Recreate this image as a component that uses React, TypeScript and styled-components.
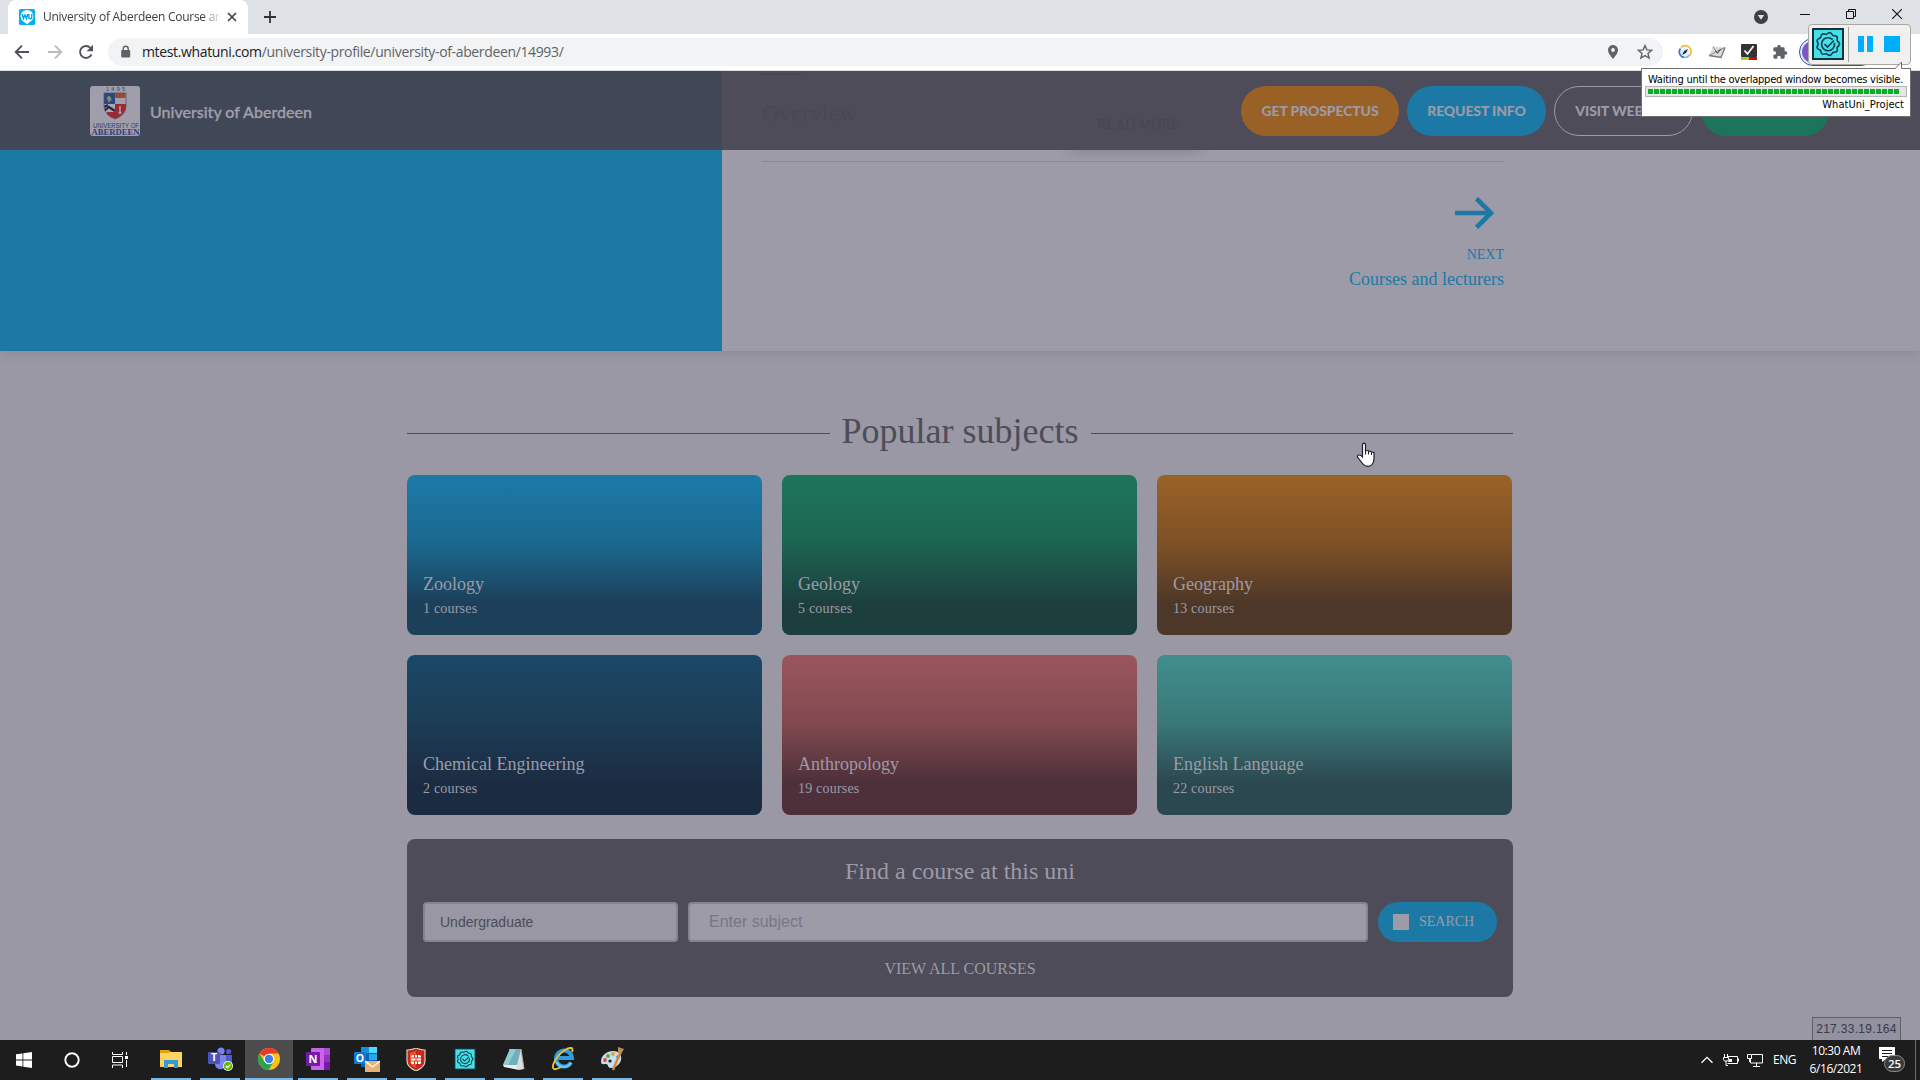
import React from 'react';
import styled, { createGlobalStyle } from 'styled-components';

const serif = '"Liberation Serif", "Times New Roman", serif';
const arial = '"Liberation Sans", Arial, sans-serif';
const ui = '"Open Sans", "Noto Sans", sans-serif';
const lato = 'Lato, sans-serif';
const pale = '#9c9ba7';
const slate = '#4d4c58';
const blue = '#1c79a6';

const Global = createGlobalStyle`
  * { box-sizing: border-box; }
  body { margin: 0; background: #9998a4; overflow: hidden; }
`;

const Screen = styled.div`
  position: relative;
  width: 1920px;
  height: 1080px;
  display: flex;
  flex-direction: column;
  overflow: hidden;
  background: #9998a4;
  font-family: ${serif};
  white-space: nowrap;
`;

/* ---------- browser chrome ---------- */
const TabStrip = styled.div`
  height: 34px;
  flex: none;
  display: flex;
  align-items: stretch;
  background: #dee1e6;
  padding-left: 8px;
`;
const Tab = styled.div`
  width: 240px;
  background: #fff;
  border-radius: 8px 8px 0 0;
  display: flex;
  align-items: center;
  padding: 0 10px 0 11px;
`;
const TabTitle = styled.div`
  width: 182px;
  margin-left: 8px;
  font: 12px/18px ${ui};
  letter-spacing: -0.27px;
  color: #3c4043;
  mask-image: linear-gradient(90deg, #000 160px, transparent 178px);
`;
const CloseIcon = styled.svg`
  margin-left: 2px;
  flex: none;
`;
const NewTab = styled.svg`
  margin: 11px 0 0 16px;
`;
const WindowButtons = styled.div`
  margin-left: auto;
  display: flex;
  align-items: flex-start;
  padding: 9px 18px 0 0;
`;
const CircleDown = styled.svg`
  margin: 1px 32px 0 0;
`;
const WinGlyph = styled.svg<{ $gap?: number }>`
  margin-right: ${(p) => p.$gap ?? 0}px;
`;
const Toolbar = styled.div`
  height: 37px;
  flex: none;
  display: flex;
  align-items: center;
  background: #fff;
  border-bottom: 1px solid #dadce0;
  padding: 0 0 0 14px;
`;
const NavIcon = styled.svg<{ $gap: number }>`
  flex: none;
  margin-right: ${(p) => p.$gap}px;
`;
const Omnibox = styled.div`
  width: 1555px;
  height: 28px;
  border-radius: 14px;
  background: #f1f3f4;
  display: flex;
  align-items: center;
  padding: 0 9px 0 11px;
`;
const Url = styled.div`
  margin-left: 10px;
  font: 14px/20px ${ui};
  letter-spacing: -0.36px;
  color: #5f6368;
  span { color: #202124; }
`;
const OmniActions = styled.div`
  margin-left: auto;
  display: flex;
  align-items: center;
  gap: 14px;
`;
const Extensions = styled.div`
  display: flex;
  align-items: center;
  gap: 15px;
  margin-left: 14px;
`;
const Avatar = styled.div`
  width: 76px;
  height: 28px;
  margin-left: -4px;
  border: 1px solid #1a56c4;
  border-radius: 14px;
  background: #e8eefb;
  padding: 2px;
  &::before {
    content: '';
    display: block;
    width: 22px;
    height: 22px;
    border-radius: 50%;
    background: #7e57c2;
  }
`;

/* ---------- page ---------- */
const Header = styled.header`
  position: relative;
  height: 79px;
  flex: none;
  display: flex;
  padding: 15px 91px 0 90px;
  background: linear-gradient(90deg, #404857 722px, ${slate} 722px);
`;
const Ghost = styled.span<{ $x: number; $y: number; $size: number; $color: string }>`
  position: absolute;
  left: ${(p) => p.$x}px;
  top: ${(p) => p.$y}px;
  font-size: ${(p) => p.$size}px;
  line-height: ${(p) => p.$size + 4}px;
  color: ${(p) => p.$color};
`;
const GhostRule = styled.span`
  position: absolute;
  left: 762px;
  top: 2px;
  width: 40px;
  height: 2px;
  background: #484753;
`;
const Crest = styled.svg`
  flex: none;
`;
const UniName = styled.div`
  margin: 12px 0 0 10px;
  font: 500 16px/28px ${lato};
  -webkit-text-stroke: 0.3px #a09fab;
  color: #a09fab;
`;
const Actions = styled.div`
  position: relative;
  margin-left: auto;
  display: flex;
  gap: 8px;
`;
const Pill = styled.button<{ $bg: string; $w: number; $outline?: boolean }>`
  width: ${(p) => p.$w}px;
  height: 50px;
  padding: 0;
  border: ${(p) => (p.$outline ? `1px solid ${pale}` : '0')};
  border-radius: 25px;
  background: ${(p) => p.$bg};
  color: ${pale};
  font: 900 14px/20px ${lato};
  letter-spacing: -0.12px;
`;
const Profile = styled.section`
  height: 201px;
  flex: none;
  display: flex;
  background: ${pale};
  box-shadow: 0 2px 10px rgba(77, 76, 88, 0.18);
`;
const BluePanel = styled.div`
  width: 722px;
  background: ${blue};
`;
const ProfileBody = styled.div`
  width: 742px;
  margin-left: 40px;
  display: flex;
  flex-direction: column;
  align-items: flex-end;
  color: ${blue};
`;
const ButtonShade = styled.div`
  align-self: flex-start;
  width: 152px;
  height: 10px;
  margin: 0 0 1px 296px;
  background: linear-gradient(180deg, rgba(77, 76, 88, 0.17), transparent);
  mask-image: linear-gradient(90deg, transparent, #000 22px, #000 130px, transparent);
`;
const Rule = styled.div`
  width: 100%;
  height: 1px;
  background: #8a8995;
`;
const NextArrow = styled.svg`
  margin: 35px 10px 0 0;
`;
const NextLabel = styled.div`
  margin-top: 16px;
  font-size: 14px;
  line-height: 20px;
`;
const NextTitle = styled.div`
  margin-top: 3px;
  font-size: 18px;
  line-height: 22px;
`;
const Popular = styled.section`
  flex: 1;
  width: 1106px;
  margin-left: 407px;
  padding-top: 60px;
`;
const Heading = styled.h2`
  display: flex;
  align-items: center;
  height: 40px;
  margin: 0 0 24px;
  font-size: 36px;
  font-weight: 400;
  line-height: 40px;
  color: ${slate};
  gap: 12px;
  &::before, &::after {
    content: '';
    flex: 1;
    height: 1px;
    margin-top: 5px;
    background: ${slate};
  }
`;
const Grid = styled.div`
  display: grid;
  grid-template-columns: repeat(3, 355px);
  grid-auto-rows: 160px;
  gap: 20px;
`;
const Card = styled.a<{ $c: [string, string, string] }>`
  display: flex;
  flex-direction: column;
  justify-content: flex-end;
  gap: 3px;
  padding: 0 16px 16px;
  border-radius: 8px;
  background: linear-gradient(180deg, ${(p) => p.$c[0]} 0, ${(p) => p.$c[1]} 42%, ${(p) => p.$c[2]} 80%);
  color: ${pale};
`;
const CardTitle = styled.div`
  font-size: 18px;
  line-height: 24px;
`;
const CardCount = styled.div`
  font-size: 14px;
  line-height: 20px;
  letter-spacing: 0.2px;
`;
const Finder = styled.div`
  height: 158px;
  margin-top: 24px;
  padding: 17px 16px 0;
  border-radius: 8px;
  background: ${slate};
  color: ${pale};
  text-align: center;
`;
const FinderTitle = styled.div`
  font-size: 24px;
  line-height: 30px;
`;
const FinderRow = styled.div`
  display: flex;
  margin-top: 16px;
  height: 40px;
`;
const Field = styled.div<{ $w: number; $pad: number; $size: number; $color: string; $gap: number; $bg: string }>`
  width: ${(p) => p.$w}px;
  margin-right: ${(p) => p.$gap}px;
  padding-left: ${(p) => p.$pad}px;
  border: 2px solid #858491;
  border-radius: 4px;
  background: ${(p) => p.$bg};
  font: ${(p) => p.$size}px/36px ${arial};
  color: ${(p) => p.$color};
  text-align: left;
`;
const SearchButton = styled.div`
  width: 119px;
  height: 40px;
  border-radius: 20px;
  background: ${blue};
  display: flex;
  align-items: center;
  padding-left: 15px;
  font-size: 14px;
  line-height: 16px;
  &::before {
    content: '';
    width: 16px;
    height: 16px;
    margin-right: 10px;
    background: ${pale};
  }
`;
const ViewAll = styled.div`
  margin-top: 17px;
  font-size: 16px;
  line-height: 20px;
`;

/* ---------- taskbar ---------- */
const Taskbar = styled.footer`
  height: 40px;
  flex: none;
  display: flex;
  background: #1d1d1d;
  color: #fff;
`;
const Slot = styled.div<{ $running?: boolean; $active?: boolean; $first?: boolean }>`
  width: ${(p) => (p.$running && !p.$active ? 40 : 48)}px;
  margin: ${(p) => (p.$running ? (p.$active ? '0 1px 0 0' : '0 5px 0 4px') : '0')};
  ${(p) => p.$first && 'margin-left: 7px;'}
  height: 40px;
  display: flex;
  align-items: center;
  justify-content: center;
  background: ${(p) => (p.$active ? '#4c4c4c' : 'transparent')};
  border-bottom: ${(p) => (p.$running ? '2px solid #76b9ed' : '0')};
  svg { flex: none; }
`;
const Tray = styled.div`
  margin-left: auto;
  display: flex;
  align-items: center;
  font: 12px/18px ${ui};
`;
const TrayIcon = styled.svg<{ $gap: number }>`
  margin-right: ${(p) => p.$gap}px;
`;
const Lang = styled.div`
  width: 23px;
  letter-spacing: -0.5px;
`;
const Clock = styled.div`
  width: 52px;
  margin: 0 17px 0 14px;
  text-align: center;
  letter-spacing: -0.45px;
  display: flex;
  flex-direction: column;
  align-items: center;
`;
const DesktopEdge = styled.div`
  width: 1px;
  height: 40px;
  margin: 0 4px 0 9px;
  background: #6b6b6b;
`;

/* ---------- floating items ---------- */
const IpBadge = styled.div`
  position: absolute;
  left: 1812px;
  top: 1017px;
  width: 89px;
  height: 23px;
  border: 1px solid #5f5e6d;
  border-bottom: 0;
  background: #9291a0;
  font: 12px/22px ${arial};
  letter-spacing: 0.3px;
  text-align: center;
  color: #3a3947;
`;
const Cursor = styled.svg`
  position: absolute;
  left: 1356px;
  top: 442px;
`;
const Recorder = styled.div`
  position: absolute;
  left: 1808px;
  top: 24px;
  width: 103px;
  height: 41px;
  display: flex;
  align-items: center;
  padding-left: 3px;
  border: 1px solid #aaa6a0;
  border-radius: 4px;
  background: #f0f0f0;
  > svg { margin-top: -2px; }
`;
const Divider = styled.div`
  width: 1px;
  height: 35px;
  margin: 0 9px 0 4px;
  background: #a5a5a5;
`;
const Block = styled.div<{ $w: number; $gap: number }>`
  width: ${(p) => p.$w}px;
  height: 16px;
  margin: -2px ${(p) => p.$gap}px 0 0;
  background: #00aeff;
`;
const Balloon = styled.div`
  position: absolute;
  left: 1641px;
  top: 68px;
  width: 270px;
  height: 49px;
  padding: 3px 3px 0 3px;
  border: 1px solid #6f6f6f;
  background: #fff;
  font: 11px/15px "DejaVu Sans Condensed", "DejaVu Sans", sans-serif;
  color: #000;
`;
const BalloonTip = styled.svg`
  position: absolute;
  right: 3px;
  top: -8px;
`;
const BalloonText = styled.div`
  padding-left: 3px;
  letter-spacing: -0.23px;
`;
const Progress = styled.div`
  height: 11px;
  width: 262px;
  display: flex;
  gap: 1px;
  margin-top: -1px;
  padding: 2px;
  border: 1px solid #b4b4b4;
  background: #e6e6e6;
`;
const Chunk = styled.i`
  width: 5px;
  height: 5px;
  background: #06b025;
`;
const ProjectName = styled.div`
  padding: 0 3px 0 0;
  text-align: right;
  letter-spacing: 0.05px;
`;

const subjects: { name: string; count: string; c: [string, string, string] }[] = [
  { name: 'Zoology', count: '1 courses', c: ['#1c7aa8', '#1b6990', '#1c405a'] },
  { name: 'Geology', count: '5 courses', c: ['#1c765c', '#1c6551', '#1c3f3e'] },
  { name: 'Geography', count: '13 courses', c: ['#9a6226', '#805126', '#4d3728'] },
  { name: 'Chemical Engineering', count: '2 courses', c: ['#1b4868', '#1b3d55', '#1b2c42'] },
  { name: 'Anthropology', count: '19 courses', c: ['#9b555d', '#824950', '#4d303a'] },
  { name: 'English Language', count: '22 courses', c: ['#428e8d', '#3a7879', '#2b4850'] },
];

function gearPoints(cx: number, cy: number, r: number, a: number) {
  return Array.from({ length: 72 }, (_, i) => {
    const t = (i / 72) * Math.PI * 2;
    const q = r + a * Math.cos(t * 9);
    return `${(cx + q * Math.cos(t)).toFixed(2)},${(cy + q * Math.sin(t)).toFixed(2)}`;
  }).join(' ');
}

const GearBadge = ({ size }: { size: number }) => (
  <svg width={size} height={size} viewBox="0 0 32 32">
    <rect width="32" height="32" fill="#12313f" />
    <rect x="2" y="2" width="28" height="28" fill="#45e0e8" />
    <g fill="none" stroke="#12404f" strokeWidth="1.6">
      <polygon points={gearPoints(16, 16, 10.7, 0.8)} />
      <path d="M20.6 11.6A6.5 6.5 0 1 0 22.4 15" />
      <path d="M12.5 16l3 3 6.5-6.5" />
    </g>
  </svg>
);

const Chrome = () => (
  <svg width="22" height="22" viewBox="0 0 22 22">
    <circle cx="11" cy="11" r="11" fill="#fbc116" />
    <path d="M11 11L1.5 5.5A11 11 0 0 1 20.5 5.5H11z" fill="#e33b2e" />
    <path d="M11 11L6.2 13.6 1.5 5.5A11 11 0 0 0 10.6 22l5-8.6z" fill="#2ba24c" />
    <circle cx="11" cy="11" r="5.3" fill="#fff" />
    <circle cx="11" cy="11" r="4.2" fill="#3f7de8" />
  </svg>
);

const UniversityCrest = () => (
  <Crest width="50" height="50" viewBox="0 0 50 50">
    <rect width="50" height="50" rx="3" fill="#9f9eaa" />
    <g fontFamily={arial} fill="#2f3f77" textAnchor="middle">
      <text x="25.5" y="5" fontSize="5.5" textLength="19">1495</text>
      <text x="26" y="41.5" fontSize="6.5" textLength="46" lengthAdjust="spacingAndGlyphs">UNIVERSITY OF</text>
      <text x="25.5" y="49.3" fontSize="9" fontWeight="700" fontFamily={serif} textLength="48" lengthAdjust="spacingAndGlyphs">ABERDEEN</text>
    </g>
    <clipPath id="shield"><path d="M14 7h22v13q0 9-11 13Q14 29 14 20z" /></clipPath>
    <g clipPath="url(#shield)">
      <path d="M14 7h11v11H14z" fill="#28478c" />
      <path d="M25 7h11v11H25z" fill="#9f9eaa" />
      <path d="M25 7h11v5H25z" fill="#a3602f" />
      <path d="M27 7v5M30 7v5M33 7v5" stroke="#9c2a33" strokeWidth="1.3" />
      <path d="M14 18h11v16H14z" fill="#a6a5b0" />
      <path d="M25 18h11v16H25z" fill="#9c2a33" />
      <path d="M17 26h8v8h-8z" fill="#9c2a33" />
      <path d="M14 25l5-4 6 4M14 21l4-2" stroke="#26263a" strokeWidth="2.2" fill="none" />
      <path d="M17 12l2-2 2 2-2 4zM18 14h4" stroke="#7c8d62" fill="#8c8a64" />
      <path d="M30 20v7M28.5 27h3" stroke="#a9a8b3" strokeWidth="1.5" />
    </g>
    <path d="M14 7h22v13q0 9-11 13Q14 29 14 20z" fill="none" stroke="#50506a" strokeWidth=".7" />
  </Crest>
);

const taskIcons: React.ReactNode[] = [
  <svg width="22" height="18" viewBox="0 0 22 18" key="folder">
    <path d="M0 0h9l2 2H0z" fill="#d99b00" /><path d="M0 2h22v15H0z" fill="#fcd462" /><path d="M0 0h9v3H0z" fill="#e0a10a" />
    <path d="M4 18v-8h14v8h-4v-4H8v4z" fill="#3a97d8" />
  </svg>,
  <svg width="25" height="24" viewBox="0 0 25 24" key="teams">
    <circle cx="13" cy="4" r="3.6" fill="#7b83eb" /><circle cx="20.6" cy="4.6" r="2.7" fill="#5059c9" />
    <path d="M16 8h8v8q-1 5-6 4z" fill="#5059c9" /><path d="M7 8h11v9q-1 6-7 5-4-1-4-5z" fill="#7b83eb" />
    <rect y="5" width="12" height="12" rx="1" fill="#4b53bc" />
    <text x="6" y="14.3" fontSize="10.5" fontWeight="700" fill="#fff" textAnchor="middle" fontFamily={ui}>T</text>
    <circle cx="20" cy="19" r="5" fill="#fff" /><circle cx="20" cy="19" r="4.3" fill="#6bb700" />
    <path d="M17.8 19l1.6 1.6 3-3" stroke="#fff" strokeWidth="1.3" fill="none" />
  </svg>,
  <Chrome key="chrome" />,
  <svg width="24" height="22" viewBox="0 0 24 22" key="onenote">
    <rect x="5" width="19" height="22" rx="1" fill="#ca64ea" /><path d="M18 0h6v7h-6z" fill="#ae4bd5" /><path d="M18 7h6v7h-6z" fill="#9332bf" /><path d="M18 14h6v8h-6z" fill="#7719aa" />
    <rect y="4" width="14" height="14" rx="1" fill="#7719aa" />
    <text x="7" y="15" fontSize="11" fontWeight="700" fill="#fff" textAnchor="middle" fontFamily={ui}>N</text>
  </svg>,
  <svg width="26" height="25" viewBox="0 0 26 25" key="outlook">
    <path d="M7 0h16v8H7z" fill="#1490df" /><path d="M15 0h8v7h-8z" fill="#50d9ff" /><path d="M7 6h16v14H7z" fill="#0364b8" /><path d="M15 7h8v6h-8z" fill="#28a8ea" />
    <rect y="5" width="12" height="12" rx="1" fill="#0f78d4" />
    <text x="6" y="14.5" fontSize="10.5" fontWeight="700" fill="#fff" textAnchor="middle" fontFamily={ui}>O</text>
    <path d="M11 14h15v11H11z" fill="#e8b273" /><path d="M11 14l7.5 6 7.5-6" fill="none" stroke="#fff" strokeWidth="1.3" />
  </svg>,
  <svg width="20" height="23" viewBox="0 0 20 23" key="shield">
    <path d="M1 2q5 0 9-2 4 2 9 2v11q0 6-9 10-9-4-9-10z" fill="#c32b18" stroke="#cfcfcf" strokeWidth="1.2" />
    <path d="M4 5l6-2v17q-6-3-6-7z" fill="#e8502f" />
    <rect x="5" y="7" width="10" height="9" rx="1.5" fill="#fff" /><path d="M5 10h10M5 13h10M8.5 7v3M11.5 7v3M8.5 13v3M11.5 13v3M10 10v3" stroke="#cf3420" />
  </svg>,
  <GearBadge size={22} key="gear" />,
  <svg width="24" height="23" viewBox="0 0 24 23" key="note">
    <path d="M7 1h12l3 20-5 1z" fill="#d9dede" /><path d="M8 1h11l-4 16H1z" fill="#6fb0bd" /><path d="M8 1h6L6 17H1z" fill="#94cbd3" /><path d="M1 17h14l2 5-15-3z" fill="#eceeee" /><path d="M19 1l3 20" stroke="#a9a9a9" />
  </svg>,
  <svg width="24" height="24" viewBox="0 0 24 24" key="ie">
    <path d="M20 15.5A8 8 0 1 1 21 11H7" fill="none" stroke="#2d9de0" strokeWidth="4" />
    <path d="M20 15.5A8 8 0 0 1 5.5 15" fill="none" stroke="#6bcaf5" strokeWidth="2" />
    <path d="M3 22C-1 20 6 8 14 3c5-3 9-3 7 2M3 22c2 1 5-1 7-2" fill="none" stroke="#f1c22e" strokeWidth="1.9" />
  </svg>,
  <svg width="25" height="24" viewBox="0 0 25 24" key="paint">
    <path d="M1 15C1 8 7 4 13 4c7 0 9 5 8 9s-5 8-10 8c-4 0-2-4-5-4-2 0-5 1-5-2z" fill="#c4dff0" />
    <circle cx="8" cy="9" r="2" fill="#4fae46" /><circle cx="13" cy="7" r="2" fill="#e8a22c" /><circle cx="5" cy="13" r="1.9" fill="#e04b3c" /><circle cx="10" cy="14" r="1.6" fill="#1d1d1d" /><circle cx="18" cy="10" r="1.8" fill="#4088d6" />
    <path d="M21 4l-8 19" stroke="#d58a2f" strokeWidth="2.4" /><path d="M18 0l6 2-3 5-3-2z" fill="#b98e63" />
  </svg>,
];

export default function App() {
  return (
    <Screen>
      <Global />
      <TabStrip>
        <Tab>
          <svg width="16" height="16" viewBox="0 0 16 16">
            <rect width="16" height="16" rx="1.5" fill="#00b0f4" />
            <circle cx="8" cy="7.3" r="6.4" fill="#fff" /><path d="M4.5 12h7L8 15.5z" fill="#fff" />
            <path d="M3.2 5l1.2 4.6L6 6l1.5 3.6L8.700 5M9.800 5v3q0 1.700 1.500 1.700T12.800 8V5" fill="none" stroke="#00a5e8" strokeWidth="1.4" />
          </svg>
          <TabTitle>University of Aberdeen Course an</TabTitle>
          <CloseIcon width="10" height="10" viewBox="0 0 10 10"><path d="M1 1l8 8M9 1l-8 8" stroke="#3c4043" strokeWidth="1.7" /></CloseIcon>
        </Tab>
        <NewTab width="12" height="12" viewBox="0 0 12 12"><path d="M6 0v12M0 6h12" stroke="#303336" strokeWidth="1.8" /></NewTab>
        <WindowButtons>
          <CircleDown width="14" height="14" viewBox="0 0 14 14"><circle cx="7" cy="7" r="7" fill="#3c4043" /><path d="M3.8 5h6.4L7 9.8z" fill="#dee1e6" /></CircleDown>
          <WinGlyph $gap={36} width="10" height="10"><path d="M0 5.5h10" stroke="#111" /></WinGlyph>
          <WinGlyph $gap={36} width="10" height="10"><path d="M.5 2.5h7v7h-7zM2.5 2V.5h7v7H8" fill="none" stroke="#111" /></WinGlyph>
          <WinGlyph width="10" height="10"><path d="M0 0l10 10M10 0L0 10" stroke="#111" strokeWidth="1.1" /></WinGlyph>
        </WindowButtons>
      </TabStrip>
      <Toolbar>
        <NavIcon $gap={17} width="16" height="16" viewBox="0 0 16 16"><path d="M15 8H2M8 1.7L1.7 8 8 14.3" fill="none" stroke="#50545a" strokeWidth="1.9" /></NavIcon>
        <NavIcon $gap={15} width="16" height="16" viewBox="0 0 16 16"><path d="M1 8h13M8 1.7L14.3 8 8 14.3" fill="none" stroke="#babcbe" strokeWidth="1.9" /></NavIcon>
        <NavIcon $gap={14} width="16" height="16" viewBox="0 0 16 16"><path d="M13.5 10.5A6 6 0 1 1 12.4 3.8" fill="none" stroke="#50545a" strokeWidth="1.9" /><path d="M15 .8v6.4H8.6z" fill="#50545a" /></NavIcon>
        <Omnibox>
          <svg width="13" height="14" viewBox="0 0 13 14"><rect x="2.2" y="5" width="9" height="7.5" rx="1" fill="#5f6368" /><path d="M4.2 5.5V3.8a2.5 2.5 0 0 1 5 0v1.7" fill="none" stroke="#5f6368" strokeWidth="1.4" /></svg>
          <Url><span>mtest.whatuni.com</span>/university-profile/university-of-aberdeen/14993/</Url>
          <OmniActions>
            <svg width="18" height="16" viewBox="0 0 18 16"><path d="M9 1a5 5 0 0 0-5 5c0 3.6 5 9 5 9s5-5.400 5-9a5 5 0 0 0-5-5z" fill="#5f6368" /><circle cx="9" cy="6" r="1.9" fill="#f1f3f4" /></svg>
            <svg width="18" height="16" viewBox="0 0 18 16"><path d="M9 1.600l1.900 4.300 4.700.4-3.600 3.100 1.100 4.600L9 11.600 4.900 14 6 9.400 2.400 6.300l4.700-.4z" fill="none" stroke="#5f6368" strokeWidth="1.400" /></svg>
          </OmniActions>
        </Omnibox>
        <Extensions>
          <svg width="16" height="16" viewBox="0 0 16 16"><path d="M4 3.500A5.500 5.500 0 0 1 12.500 11.500" fill="none" stroke="#f5b82e" strokeWidth="1.700" /><path d="M3.500 4.500A5.500 5.500 0 0 0 7.500 13.400" fill="none" stroke="#3f74c4" strokeWidth="1.700" /><path d="M12.500 11q-1.500 2.500-4.500 2.500" fill="none" stroke="#7fb4e8" strokeWidth="1.500" /><circle cx="8" cy="8" r="4.300" fill="#e3effa" /><path d="M11 5L9 9l-4 2 2-4z" fill="#1d2f4c" /></svg>
          <svg width="18" height="16" viewBox="0 0 18 16"><path d="M5 2.500l12 1-4 10L1 11.500z" fill="#dcdcdc" /><path d="M1 11.500l12 2 4-10" fill="none" stroke="#777" strokeWidth="1.300" /><path d="M5 2.500l3 5 9-4M1 11.500l6-3" fill="none" stroke="#888" /><path d="M7 7l2.500 2L13 5" fill="none" stroke="#555" strokeWidth="1.100" /></svg>
          <svg width="16" height="16" viewBox="0 0 16 16"><rect width="16" height="13" rx="1" fill="#333" /><path d="M3.500 6.500l3 3.500 6-8" fill="none" stroke="#fff" strokeWidth="1.700" /><path d="M0 13h8v3H0z" fill="#a8cf1d" /><path d="M8 13h8v3H8z" fill="#c00d18" /></svg>
          <svg width="16" height="16" viewBox="0 0 24 24"><path fill="#5f6368" d="M20.500 11H19V7a2 2 0 0 0-2-2h-4V3.500a2.500 2.500 0 0 0-5 0V5H4a2 2 0 0 0-2 2v3.800h1.500a2.700 2.700 0 0 1 0 5.400H2V20a2 2 0 0 0 2 2h3.800v-1.500a2.700 2.700 0 0 1 5.400 0V22H17a2 2 0 0 0 2-2v-4h1.500a2.500 2.500 0 0 0 0-5z" /></svg>
          <Avatar />
        </Extensions>
      </Toolbar>

      <Header>
        <GhostRule />
        <Ghost $x={762} $y={28} $size={24} $color="#494854">Overview</Ghost>
        <Ghost $x={1097} $y={45} $size={14} $color="#424857">READ MORE</Ghost>
        <UniversityCrest />
        <UniName>University of Aberdeen</UniName>
        <Actions>
          <Pill $bg="#996126" $w={158}>GET PROSPECTUS</Pill>
          <Pill $bg={blue} $w={139}>REQUEST INFO</Pill>
          <Pill $bg="transparent" $w={139} $outline>VISIT WEBSITE</Pill>
          <Pill $bg="#1c745b" $w={128} />
        </Actions>
      </Header>
      <Profile>
        <BluePanel />
        <ProfileBody>
          <ButtonShade />
          <Rule />
          <NextArrow width="39" height="32" viewBox="0 0 39 32"><path d="M0 16h36M21.500 1.500L36 16 21.500 30.500" fill="none" stroke={blue} strokeWidth="4.600" /></NextArrow>
          <NextLabel>NEXT</NextLabel>
          <NextTitle>Courses and lecturers</NextTitle>
        </ProfileBody>
      </Profile>
      <Popular>
        <Heading>Popular subjects</Heading>
        <Grid>
          {subjects.map((s) => (
            <Card key={s.name} $c={s.c}>
              <CardTitle>{s.name}</CardTitle>
              <CardCount>{s.count}</CardCount>
            </Card>
          ))}
        </Grid>
        <Finder>
          <FinderTitle>Find a course at this uni</FinderTitle>
          <FinderRow>
            <Field $w={255} $gap={10} $pad={15} $size={14} $color="#4d4c58" $bg="#9897a3">Undergraduate</Field>
            <Field $w={680} $gap={10} $pad={19} $size={16} $color="#777683" $bg={pale}>Enter subject</Field>
            <SearchButton><span>SEARCH</span></SearchButton>
          </FinderRow>
          <ViewAll>VIEW ALL COURSES</ViewAll>
        </Finder>
      </Popular>

      <Taskbar>
        <Slot><svg width="16" height="16" viewBox="0 0 16 16"><path d="M0 2.300l6.500-.9v6.100H0zM7.300 1.300L16 0v7.500H7.300zM0 8.400h6.500v6.100L0 13.600zM7.300 8.400H16V16l-8.700-1.300z" fill="#fff" /></svg></Slot>
        <Slot><svg width="16" height="16" viewBox="0 0 16 16"><circle cx="8" cy="8" r="6.700" fill="none" stroke="#fff" strokeWidth="1.900" /></svg></Slot>
        <Slot><svg width="16" height="16" viewBox="0 0 16 16"><path d="M.5 0v2.500h10V0M.5 4.500h10v6H.5zM.5 16v-3h10v3M14.500 0v3M14.500 8v7" fill="none" stroke="#fff" /><path d="M13 4h3v3h-3z" fill="#fff" /></svg></Slot>
        {taskIcons.map((icon, i) => (
          <Slot key={i} $running $active={i === 2} $first={i === 0}>{icon}</Slot>
        ))}
        <Tray>
          <TrayIcon $gap={10} width="12" height="8" viewBox="0 0 12 8"><path d="M.5 6.800L6 1.300l5.500 5.500" fill="none" stroke="#fff" strokeWidth="1.300" /></TrayIcon>
          <TrayIcon $gap={8} width="16" height="12" viewBox="0 0 16 12"><path d="M5 2.500h9.500v7H4.500M15.500 4.500v3M1.500 0v3M4.500 0v3M.5 3.500h5v2l-1 1.500h-3l-1-1.500zM3 7v4.500h2" fill="none" stroke="#fff" /><path d="M6 5h3v3H5z" fill="#fff" /></TrayIcon>
          <TrayIcon $gap={10} width="16" height="13" viewBox="0 0 16 13"><path d="M5 .5h10.500v8.500H3.500V5M9.500 9v3M6 12.500h7M.5.500h4v4h-4zM2.500 4v4" fill="none" stroke="#fff" /></TrayIcon>
          <Lang>ENG</Lang>
          <Clock><span>10:30 AM</span><span>6/16/2021</span></Clock>
          <svg width="27" height="26" viewBox="0 0 27 26">
            <path d="M0 0h16v12H7l-4 3v-3H0z" fill="#fff" /><path d="M3 3.500h10M3 6.500h10M3 9.500h6" stroke="#1d1d1d" />
            <rect x="5.500" y="8.500" width="20" height="16" rx="8" fill="#3a3a3a" stroke="#8c8c8c" />
            <text x="15.500" y="20.500" fontSize="11.500" fontWeight="600" fill="#fff" textAnchor="middle" fontFamily={ui}>25</text>
          </svg>
          <DesktopEdge />
        </Tray>
      </Taskbar>

      <IpBadge>217.33.19.164</IpBadge>
      <Cursor width="20" height="26" viewBox="0 0 20 26">
        <path d="M6.500 14.500V3q0-1.800 1.500-1.800T9.500 3v5.500q3 0 4.500.7t4 1.300V17q0 3-2 5.500-1.500 1.800-4 1.800-3.500 0-5.500-2.800l-5-6.500q-.5-2 1.500-2t3.500 1.800z" fill="#fff" stroke="#1c1b2c" strokeWidth="1.200" />
        <path d="M9.500 8v4.500M12.500 9v3.500M15.500 10v3" stroke="#1c1b2c" strokeWidth="1.100" />
      </Cursor>
      <Recorder>
        <GearBadge size={32} />
        <Divider />
        <Block $w={6} $gap={3} />
        <Block $w={6} $gap={11} />
        <Block $w={16} $gap={0} />
      </Recorder>
      <Balloon>
        <BalloonTip width="12" height="9" viewBox="0 0 12 9"><path d="M0 8L6.500 1v8H0z" fill="#fff" /><path d="M0 7.500L6.500 1v6.500" fill="none" stroke="#6f6f6f" /></BalloonTip>
        <BalloonText>Waiting until the overlapped window becomes visible.</BalloonText>
        <Progress>{Array.from({ length: 42 }, (_, i) => <Chunk key={i} />)}</Progress>
        <ProjectName>WhatUni_Project</ProjectName>
      </Balloon>
    </Screen>
  );
}
